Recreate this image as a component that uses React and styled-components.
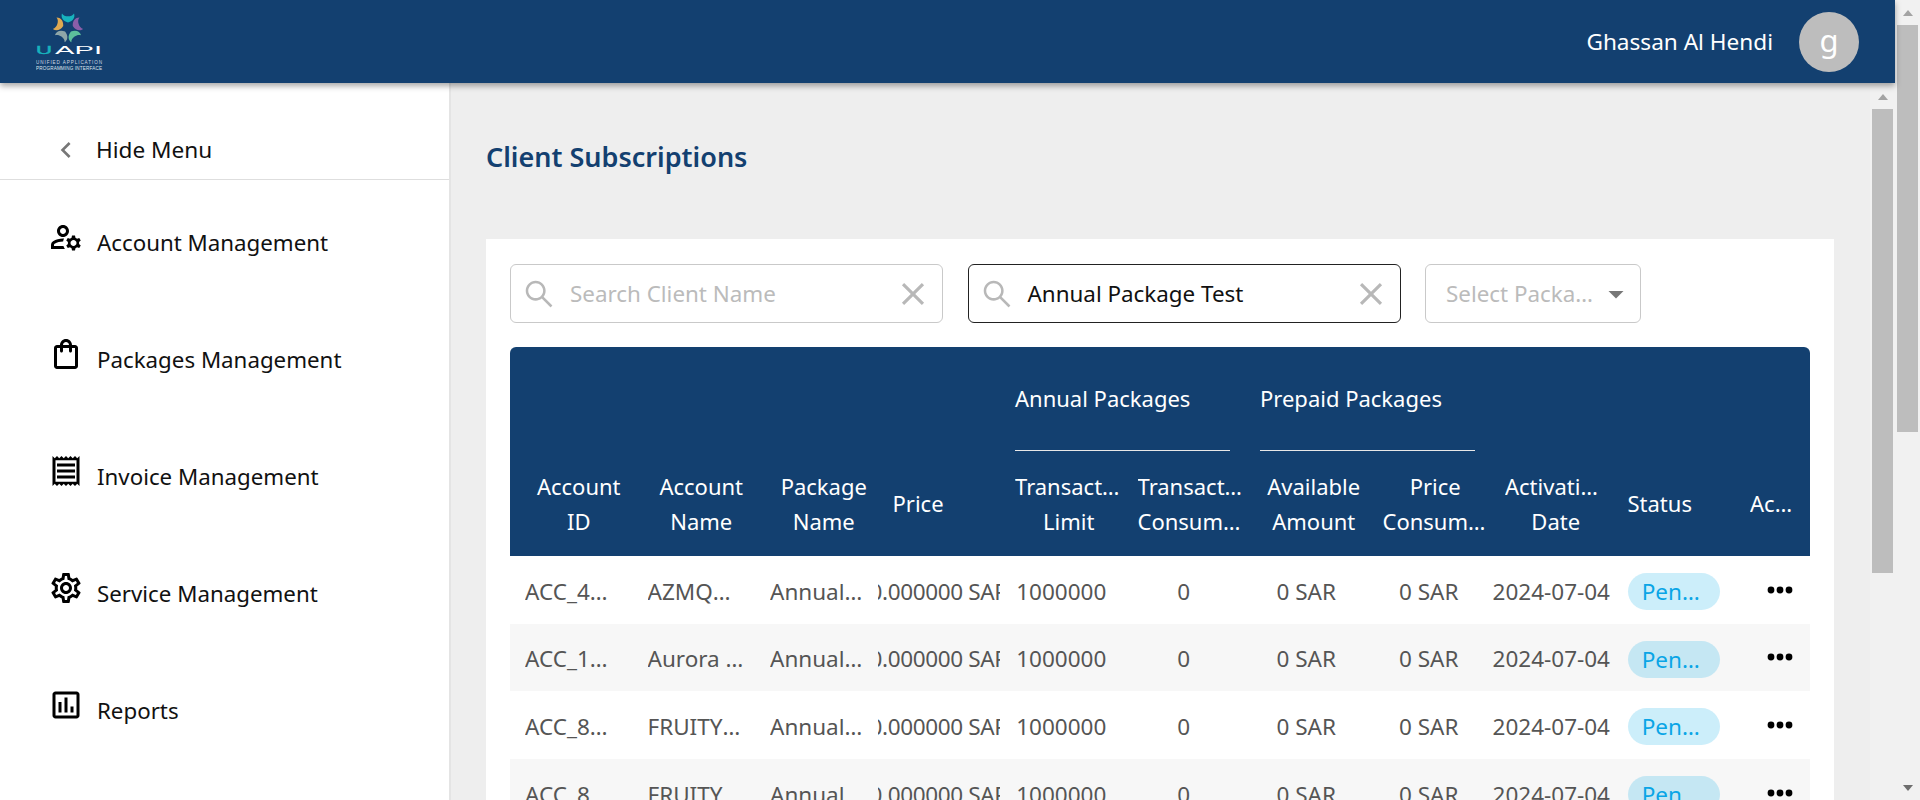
import React from 'react';
import styled, { createGlobalStyle } from 'styled-components';
import {
  MdOutlineManageAccounts,
  MdOutlineShoppingBag,
  MdOutlineReceipt,
  MdOutlineSettings,
  MdOutlineAssessment,
  MdChevronLeft,
  MdClose,
  MdArrowDropDown,
} from 'react-icons/md';
import { AiOutlineSearch } from 'react-icons/ai';

const navy = '#134070';
const font = '"Noto Sans", "Open Sans", "Liberation Sans", sans-serif';

const GlobalStyle = createGlobalStyle`
  html, body {
    margin: 0;
    height: 100%;
    overflow: hidden;
    font-family: ${font};
    background: #fff;
  }
  * { box-sizing: border-box; }
`;

const Page = styled.div`
  display: flex;
  width: 1920px;
  height: 800px;
  overflow: hidden;
`;
const Content = styled.div`
  display: flex;
  flex-direction: column;
  width: 1895px;
  height: 800px;
`;
const Header = styled.header`
  position: relative;
  z-index: 2;
  flex: 0 0 83px;
  display: flex;
  align-items: center;
  padding: 0 36px 0 36px;
  background: ${navy};
  box-shadow: 0 3px 6px rgba(0, 0, 0, 0.35);
`;
const UserName = styled.span`
  margin-left: auto;
  margin-right: 26px;
  color: #fff;
  font-size: 22.6px;
`;
const Avatar = styled.div`
  width: 60px;
  height: 60px;
  border-radius: 50%;
  background: #bdbdbd;
  color: #fff;
  font-size: 31px;
  padding-bottom: 3px;
  display: flex;
  align-items: center;
  justify-content: center;
`;
const Body = styled.div`
  flex: 1;
  min-height: 0;
  display: flex;
`;
const Sidebar = styled.aside`
  flex: 0 0 451px;
  background: #fff;
  border-right: 2px solid #e4e4e4;
`;
const HideRow = styled.div`
  height: 97px;
  display: flex;
  align-items: center;
  padding: 37px 0 0 50px;
  border-bottom: 1px solid #dedede;
  color: #111;
  font-size: 22.6px;
  svg { color: #777; margin-right: 14px; flex: none; }
`;
const NavList = styled.nav`
  display: flex;
  flex-direction: column;
`;
const NavItem = styled.div`
  height: 117px;
  display: flex;
  align-items: center;
  padding-left: 48px;
  color: #111;
  font-size: 22.3px;
  &:first-child { margin-top: 4px; }
`;
const NavIcon = styled.span`
  flex: 0 0 49px;
  display: flex;
  margin-top: -12px;
  color: #000;
  svg { display: block; }
`;
const Main = styled.main`
  flex: 1;
  min-width: 0;
  background: #eee;
  padding: 0 36px 0 35px;
  overflow: hidden;
`;
const Title = styled.h1`
  margin: 0;
  height: 156px;
  display: flex;
  align-items: center;
  padding-bottom: 10px;
  color: ${navy};
  font-size: 27px;
  font-weight: 600;
`;
const Card = styled.section`
  background: #fff;
  padding: 25px 24px 0;
  height: 600px;
  overflow: hidden;
`;
const Filters = styled.div`
  display: flex;
  gap: 24.5px;
  margin-bottom: 24px;
`;
const SearchBox = styled.div`
  width: 433px;
  height: 59px;
  display: flex;
  align-items: center;
  padding: 0 10px 0 11px;
  background: #fff;
  border: 1px solid ${(p) => (p.$active ? '#222' : '#c9c9c9')};
  border-radius: 6px;
  font-size: 22.4px;
  color: ${(p) => (p.$active ? '#111' : '#bbb')};
  svg { color: #b8b8b8; flex: none; }
`;
const SearchText = styled.span`
  flex: 1;
  margin-left: 14px;
  white-space: nowrap;
`;
const SelectBox = styled(SearchBox)`
  width: 216px;
  padding: 0 6px 0 20px;
  color: #bbb;
  svg { color: #777; }
`;
const SelectText = styled.span`
  flex: 1;
  min-width: 0;
  white-space: nowrap;
  overflow: hidden;
  text-overflow: ellipsis;
`;
const columns = 'repeat(10, 122.5px) 75px';
const TableHead = styled.div`
  display: grid;
  grid-template-columns: ${columns};
  grid-template-rows: 104px 105px;
  background: ${navy};
  border-radius: 6px 6px 0 0;
  color: #fff;
  font-size: 22px;
`;
const GroupCell = styled.div`
  grid-column: span 2;
  margin: 0 15px;
  padding-bottom: 2px;
  display: flex;
  align-items: center;
  border-bottom: 1px solid #e8e8e8;
  white-space: nowrap;
`;
const HeadCell = styled.div`
  grid-row: ${(p) => (p.$spacer ? '1' : '2')};
  padding: 0 ${(p) => p.$right ?? 0}px 0 15px;
  min-width: 0;
  display: flex;
  flex-direction: column;
  justify-content: center;
  align-items: ${(p) => (p.$left ? 'flex-start' : 'stretch')};
  text-align: ${(p) => (p.$left ? 'left' : 'center')};
  line-height: 35px;
  span {
    display: block;
    max-width: 100%;
    white-space: nowrap;
    overflow: hidden;
    text-overflow: ellipsis;
  }
`;
const Row = styled.div`
  display: grid;
  grid-template-columns: ${columns};
  height: 67.6px;
  background: ${(p) => (p.$even ? '#f7f7f7' : '#fff')};
  color: #555;
  font-size: 22.5px;
`;
const Cell = styled.div`
  min-width: 0;
  padding: 3px ${(p) => p.$right ?? 15}px 0 15px;
  overflow: hidden;
  display: flex;
  align-items: center;
  justify-content: center;
  white-space: nowrap;
  letter-spacing: ${(p) => (p.$tight ? '-0.35px' : 'normal')};
`;
const Truncate = styled.span`
  flex: 1;
  min-width: 0;
  overflow: hidden;
  text-overflow: ellipsis;
`;
const StatusPill = styled.span`
  flex: none;
  width: 92px;
  height: 37px;
  margin-top: 1px;
  padding: 0 14px;
  border-radius: 19px;
  background: rgba(0, 170, 230, 0.2);
  color: #0aa5e6;
  line-height: 38px;
  overflow: hidden;
  text-overflow: ellipsis;
  text-align: center;
`;
const DotsIcon = styled.svg`
  margin: -3px 0 0 14px;
  flex: none;
`;
const Scrollbar = styled.div`
  flex: 0 0 25px;
  height: 100%;
  background: #f1f1f1;
  display: flex;
  flex-direction: column;
  align-items: center;
  padding-top: ${(p) => p.$top}px;
  padding-bottom: 9px;
`;
const Thumb = styled.div`
  width: 21px;
  height: ${(p) => p.$height}px;
  margin-top: ${(p) => p.$gap}px;
  background: #bdbdbd;
`;
const ArrowUp = styled.div`
  width: 0;
  height: 0;
  border: 5.5px solid transparent;
  border-top: 0;
  border-bottom: 6px solid #a3a3a3;
`;
const ArrowDown = styled(ArrowUp)`
  margin-top: auto;
  border-top: 6px solid #6e6e6e;
  border-bottom: 0;
`;

const Logo = () => (
  <svg width="68" height="60" viewBox="0 0 68 60">
    {[
      ['#17b3bd', 0],
      ['#8a5ea8', 72],
      ['#5cc09c', 144],
      ['#8ea6a8', 216],
      ['#dfa952', 288],
    ].map(([color, angle]) => (
      <path
        key={angle}
        transform={`rotate(${angle} 32 15.500)`}
        d="M26 1.500c1.200 2 3.500 2.800 6 2.800s4.800-.8 6-2.800c1.300 3.500 -.5 7.500 -6 9c-5.500 -1.500 -7.300 -5.500 -6 -9z"
        fill={color}
      />
    ))}
    <text x="0" y="41.500" fontFamily="Liberation Sans, sans-serif" fontSize="11.500" fill="#17b3bd" stroke="#17b3bd" strokeWidth="0.4" textLength="16" lengthAdjust="spacingAndGlyphs">U</text>
    <text x="19" y="41.500" fontFamily="Liberation Sans, sans-serif" fontSize="11.500" fill="#fff" textLength="47" lengthAdjust="spacingAndGlyphs">API</text>
    <text x="0" y="52" fontFamily="Liberation Sans, sans-serif" fontSize="4.600" fill="#cfd8e2" textLength="66" lengthAdjust="spacing">UNIFIED APPLICATION</text>
    <text x="0" y="57.500" fontFamily="Liberation Sans, sans-serif" fontSize="4.600" fill="#dfe5ec" textLength="66" lengthAdjust="spacing">PROGRAMMING INTERFACE</text>
  </svg>
);

const navItems = [
  { label: 'Account Management', icon: <MdOutlineManageAccounts size={36} /> },
  { label: 'Packages Management', icon: <MdOutlineShoppingBag size={36} /> },
  { label: 'Invoice Management', icon: <MdOutlineReceipt size={36} /> },
  { label: 'Service Management', icon: <MdOutlineSettings size={36} /> },
  { label: 'Reports', icon: <MdOutlineAssessment size={36} /> },
];

const rows = [
  { id: 'ACC_4829103', name: 'AZMQHOLDINGS', even: false },
  { id: 'ACC_1736204', name: 'Aurora Trading', even: true },
  { id: 'ACC_8491027', name: 'FRUITY Company', even: false },
  { id: 'ACC_8302716', name: 'FRUITY Company', even: true },
];

const Dots = () => (
  <DotsIcon width="26" height="8" viewBox="0 0 26 8">
    <circle cx="4" cy="4" r="3.400" fill="#000" />
    <circle cx="13" cy="4" r="3.400" fill="#000" />
    <circle cx="22" cy="4" r="3.400" fill="#000" />
  </DotsIcon>
);

const heads = [
  { lines: ['Account', 'ID'] },
  { lines: ['Account', 'Name'] },
  { lines: ['Package', 'Name'] },
  { lines: ['Price'] },
  { lines: ['Transaction', 'Limit'] },
  { lines: ['Transaction', 'Consumed'] },
  { lines: ['Available', 'Amount'] },
  { lines: ['Price', 'Consumed'], right: 2 },
  { lines: ['Activation', 'Date'], right: 6 },
  { lines: ['Status'] },
  { lines: ['Actions'], right: 15 },
];

export default function App() {
  return (
    <Page>
      <GlobalStyle />
      <Content>
        <Header>
          <Logo />
          <UserName>Ghassan Al Hendi</UserName>
          <Avatar>g</Avatar>
        </Header>
        <Body>
          <Sidebar>
            <HideRow>
              <MdChevronLeft size={32} />
              Hide Menu
            </HideRow>
            <NavList>
              {navItems.map((item) => (
                <NavItem key={item.label}>
                  <NavIcon>{item.icon}</NavIcon>
                  {item.label}
                </NavItem>
              ))}
            </NavList>
          </Sidebar>
          <Main>
            <Title>Client Subscriptions</Title>
            <Card>
              <Filters>
                <SearchBox>
                  <AiOutlineSearch size={34} />
                  <SearchText>Search Client Name</SearchText>
                  <MdClose size={38} />
                </SearchBox>
                <SearchBox $active>
                  <AiOutlineSearch size={34} />
                  <SearchText>Annual Package Test</SearchText>
                  <MdClose size={38} />
                </SearchBox>
                <SelectBox>
                  <SelectText>Select Package</SelectText>
                  <MdArrowDropDown size={36} />
                </SelectBox>
              </Filters>
              <TableHead>
                {[0, 1, 2, 3].map((n) => (
                  <HeadCell key={n} $spacer />
                ))}
                <GroupCell>Annual Packages</GroupCell>
                <GroupCell>Prepaid Packages</GroupCell>
                {heads.map(({ lines, right }) => (
                  <HeadCell key={lines.join()} $left={lines.length === 1} $right={right}>
                    {lines.map((line) => (
                      <span key={line}>{line}</span>
                    ))}
                  </HeadCell>
                ))}
              </TableHead>
              {rows.map((row) => (
                <Row key={row.id} $even={row.even}>
                  <Cell><Truncate>{row.id}</Truncate></Cell>
                  <Cell $right={9}><Truncate>{row.name}</Truncate></Cell>
                  <Cell $right={11}><Truncate>Annual Package Test</Truncate></Cell>
                  <Cell $tight>0.000000 SAR</Cell>
                  <Cell>1000000</Cell>
                  <Cell>0</Cell>
                  <Cell>0 SAR</Cell>
                  <Cell>0 SAR</Cell>
                  <Cell>2024-07-04</Cell>
                  <Cell><StatusPill>Pending</StatusPill></Cell>
                  <Cell><Dots /></Cell>
                </Row>
              ))}
            </Card>
          </Main>
          <Scrollbar $top={11}>
            <ArrowUp />
            <Thumb $gap={9} $height={464} />
          </Scrollbar>
        </Body>
      </Content>
      <Scrollbar $top={10}>
        <ArrowUp />
        <Thumb $gap={9} $height={407} />
        <ArrowDown />
      </Scrollbar>
    </Page>
  );
}
